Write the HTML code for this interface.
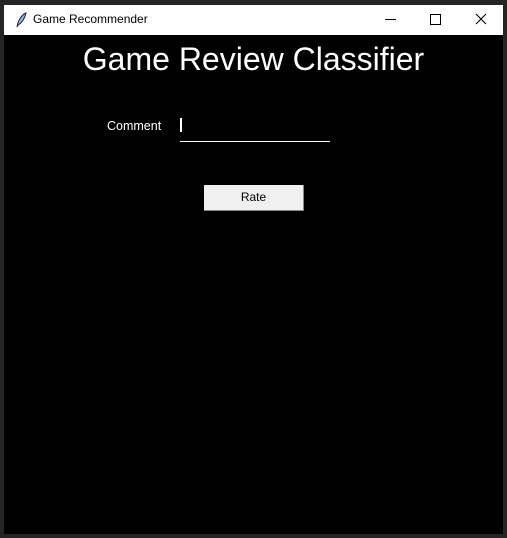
<!DOCTYPE html>
<html><head><style>
body{margin:0;width:507px;height:538px;background:#252526;position:relative;overflow:hidden;font-family:"Liberation Sans",sans-serif}
#win{position:absolute;left:4px;top:5px;width:499px;height:529px;background:#000}
#tb{position:absolute;left:0;top:0;width:499px;height:30px;background:#fff}
#tt{position:absolute;left:29px;top:7px;color:#000;font-family:"Liberation Sans",sans-serif;font-size:12px}
#h{position:absolute;left:0;width:499px;top:36px;text-align:center;color:#fff;font-size:32px}
#lbl{position:absolute;left:103px;top:114px;color:#fff;font-size:12.5px}
#cur{position:absolute;left:176px;top:113px;width:2px;height:14px;background:#fff}
#ul{position:absolute;left:176px;top:136px;width:150px;height:1px;background:#fff}
#btn{position:absolute;left:200px;top:180px;width:100px;height:26px;background:#f0f0f0;border-right:1px solid #888;border-bottom:1px solid #888;box-sizing:border-box;text-align:center;line-height:25px;font-size:12px;color:#000}
</style></head><body>
<div id="win">
<div id="tb">
<svg style="position:absolute;left:11px;top:7px" width="12" height="16" viewBox="0 0 12 16"><path d="M2 15 C3 9 6 3 11 1 C10 6 7 11 3 13 Z" fill="#8ab4e8" stroke="#223" stroke-width="1"/></svg>
<div id="tt">Game Recommender</div>
<div style="position:absolute;left:381px;top:14px;width:11px;height:1px;background:#000"></div>
<div style="position:absolute;left:426px;top:9px;width:9px;height:9px;border:1px solid #000"></div>
<svg style="position:absolute;left:471px;top:8px" width="12" height="12"><path d="M1 1L11 11M11 1L1 11" stroke="#000" stroke-width="1.1"/></svg>
</div>
<div id="h">Game Review Classifier</div>
<div id="lbl">Comment</div>
<div id="cur"></div>
<div id="ul"></div>
<div id="btn">Rate</div>
</div>
</body></html>
